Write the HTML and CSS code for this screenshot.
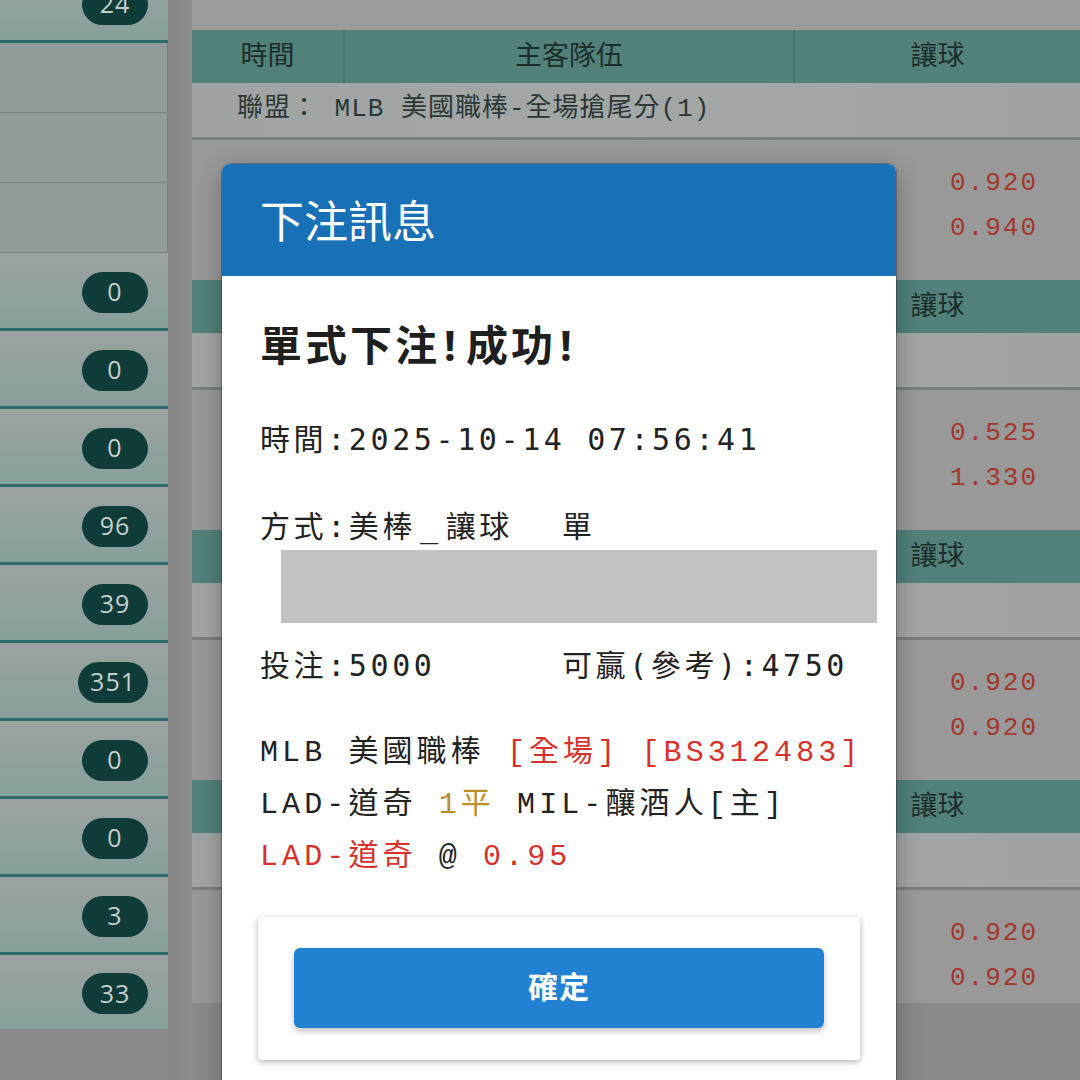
FILE: index.html
```html
<!DOCTYPE html>
<html lang="zh-Hant">
<head>
<meta charset="utf-8">
<title>下注訊息</title>
<link rel="stylesheet" href="styles.css">
</head>
<body>
<div class="page">
  <aside class="side">
    <div class="side-inner">
      <div class="srow"><span class="badge">24</span></div>
      <div class="cell"></div>
      <div class="cell"></div>
      <div class="cell"></div>
      <div class="srow"><span class="badge">0</span></div>
      <div class="srow"><span class="badge">0</span></div>
      <div class="srow"><span class="badge">0</span></div>
      <div class="srow"><span class="badge">96</span></div>
      <div class="srow"><span class="badge">39</span></div>
      <div class="srow"><span class="badge">351</span></div>
      <div class="srow"><span class="badge">0</span></div>
      <div class="srow"><span class="badge">0</span></div>
      <div class="srow"><span class="badge">3</span></div>
      <div class="srow last"><span class="badge">33</span></div>
    </div>
  </aside>
  <div class="gutter"></div>
  <main class="main">
    <section class="block">
      <div class="thead"><div class="th c1">時間</div><div class="th c2">主客隊伍</div><div class="th c3">讓球</div></div>
      <div class="league"><span class="league-text">聯盟： MLB 美國職棒-全場搶尾分(1)</span></div>
      <div class="game"><div class="odds"><div>0.920</div><div>0.940</div></div></div>
    </section>
    <section class="block">
      <div class="thead"><div class="th c1">時間</div><div class="th c2">主客隊伍</div><div class="th c3">讓球</div></div>
      <div class="league"></div>
      <div class="game"><div class="odds"><div>0.525</div><div>1.330</div></div></div>
    </section>
    <section class="block">
      <div class="thead"><div class="th c1">時間</div><div class="th c2">主客隊伍</div><div class="th c3">讓球</div></div>
      <div class="league"></div>
      <div class="game"><div class="odds"><div>0.920</div><div>0.920</div></div></div>
    </section>
    <section class="block">
      <div class="thead"><div class="th c1">時間</div><div class="th c2">主客隊伍</div><div class="th c3">讓球</div></div>
      <div class="league"></div>
      <div class="game"><div class="odds"><div>0.920</div><div>0.920</div></div></div>
    </section>
  </main>
</div>

<div class="modal">
  <div class="modal-head">下注訊息</div>
  <div class="modal-body">
    <div class="result">單式下注<span class="bang">!</span>成功<span class="bang">!</span></div>
    <div class="line first">時間:2025-10-14 07:56:41</div>
    <div class="line two"><span class="col1">方式:美棒<span class="us">_</span>讓球</span><span>單</span></div>
    <div class="redact"></div>
    <div class="line two amt"><span class="col1">投注:5000</span><span>可贏(參考):4750</span></div>
    <div class="detail">
      <div class="dline">MLB 美國職棒 <span class="red">[全場] [BS312483]</span></div>
      <div class="dline">LAD-道奇 <span class="gold">1平</span> MIL-釀酒人[主]</div>
      <div class="dline"><span class="red">LAD-道奇</span> @ <span class="red">0.95</span></div>
    </div>
    <div class="btn-card"><button class="btn">確定</button></div>
  </div>
</div>
</body>
</html>
```

FILE: styles.css
```css
* { box-sizing: border-box; }
html, body { margin: 0; padding: 0; }
body {
  width: 1080px;
  height: 1080px;
  overflow: hidden;
  background: #8a8a8a;
  font-family: "Noto Sans CJK TC", "Noto Sans", sans-serif;
  position: relative;
}
.page { display: flex; height: 1080px; }

/* sidebar */
.side { width: 168px; flex: none; overflow: hidden; height: 1080px; }
.side-inner { margin-top: -35px; display: flex; flex-direction: column; }
.srow {
  height: 78px;
  display: flex;
  justify-content: flex-end;
  align-items: center;
  padding: 3px 20px 0 0;
  background: linear-gradient(#9ca2a1, #86a09c);
  border-bottom: 3px solid #2b6c6b;
}
.srow.last { border-bottom: none; height: 74px; }
.badge {
  min-width: 66px;
  height: 41px;
  border-radius: 21px;
  background: #0f3b38;
  color: #c3cfcc;
  font-family: "Open Sans", "Noto Sans", sans-serif;
  font-size: 25px;
  letter-spacing: 1px;
  display: flex;
  align-items: center;
  justify-content: center;
  padding: 0 12px 2px;
}
.cell {
  height: 70px;
  background: #939b9a;
  border-bottom: 1px solid #7b8382;
  border-right: 1px solid #7b8382;
}
.gutter { width: 24px; flex: none; background: linear-gradient(90deg, #858585, #8e8e8e); }

/* main list */
.main {
  flex: 1;
  height: 1003px;
  overflow: hidden;
  background: #9b9b9b;
  padding-top: 30px;
}
.block { display: flex; flex-direction: column; }
.thead { display: flex; height: 53px; background: #52817a; }
.th {
  display: flex;
  align-items: center;
  justify-content: center;
  padding-bottom: 7px;
  font-size: 27px;
  color: #1b2d2a;
}
.c1 { width: 153px; border-right: 2px solid #4a7670; }
.c2 { width: 450px; border-right: 2px solid #4a7670; }
.c3 { flex: 1; }
.league {
  height: 57px;
  background: linear-gradient(90deg, #a0a5a4, #a3a8a7 50%, #a0a5a4);
  border-bottom: 3px solid #7b7e7d;
  padding: 6px 0 0 45px;
  line-height: 40px;
}
.league-text {
  font-family: "Liberation Mono", "Noto Sans CJK TC", monospace;
  font-size: 26px;
  color: #2c3635;
  letter-spacing: 1px;
  white-space: pre;
}
.game {
  height: 140px;
  background: #999999;
  display: flex;
  padding-top: 21px;
}
.odds {
  margin-left: auto;
  width: 172px;
  text-align: center;
  font-family: "Liberation Mono", monospace;
  font-size: 26px;
  letter-spacing: 2px;
  line-height: 45px;
  color: #a3372d;
}

/* modal */
.modal {
  position: absolute;
  left: 222px;
  top: 164px;
  width: 674px;
  height: 940px;
  background: #ffffff;
  border-radius: 8px 8px 0 0;
  box-shadow: 0 0 0 1px rgba(0,0,0,0.25), 0 6px 24px rgba(0,0,0,0.3);
  overflow: hidden;
}
.modal-head {
  height: 112px;
  background: #1870b7;
  color: #ffffff;
  font-size: 44px;
  padding: 0 0 3px 38px;
  display: flex;
  align-items: center;
}
.modal-body { padding: 0 18px 0 38px; color: #222222; }
.result {
  margin-top: 37px;
  height: 60px;
  line-height: 60px;
  font-size: 42px;
  font-weight: 700;
  letter-spacing: 3px;
  color: #1f1f1f;
}
.bang { font-family: "Noto Sans", sans-serif; padding: 0 7px 0 4px; }
.line {
  height: 46px;
  line-height: 46px;
  font-family: "DejaVu Sans Mono", "Noto Sans CJK TC", monospace;
  font-size: 30px;
  letter-spacing: 3.6px;
  white-space: pre;
}
.line.first { margin-top: 44px; }
.line.two { display: flex; margin-top: 41px; }
.line.amt { margin-top: 20px; }
.col1 { width: 302px; flex: none; }
.us { padding: 0 4px; }
.redact {
  margin-left: 21px;
  width: 596px;
  height: 73px;
  background: #c2c2c2;
}
.detail { margin-top: 38px; }
.dline {
  height: 52px;
  line-height: 52px;
  font-family: "Liberation Mono", "Noto Sans CJK TC", monospace;
  font-size: 30px;
  letter-spacing: 4.1px;
  white-space: pre;
  color: #222222;
}
.red { color: #d9302c; }
.gold { color: #b8912c; }
.btn-card {
  margin-top: 34px;
  margin-left: -2px;
  width: 602px;
  padding: 31px 36px 32px;
  background: #ffffff;
  border-radius: 4px;
  box-shadow: 0 2px 6px rgba(0,0,0,0.3);
}
.btn {
  display: block;
  width: 100%;
  height: 80px;
  border: none;
  border-radius: 6px;
  background: #2182d3;
  color: #ffffff;
  font-family: "Noto Sans CJK TC", sans-serif;
  font-size: 30px;
  font-weight: 700;
  letter-spacing: 1px;
  padding: 0 0 6px;
  box-shadow: 0 3px 6px rgba(0,0,0,0.25);
}
```
